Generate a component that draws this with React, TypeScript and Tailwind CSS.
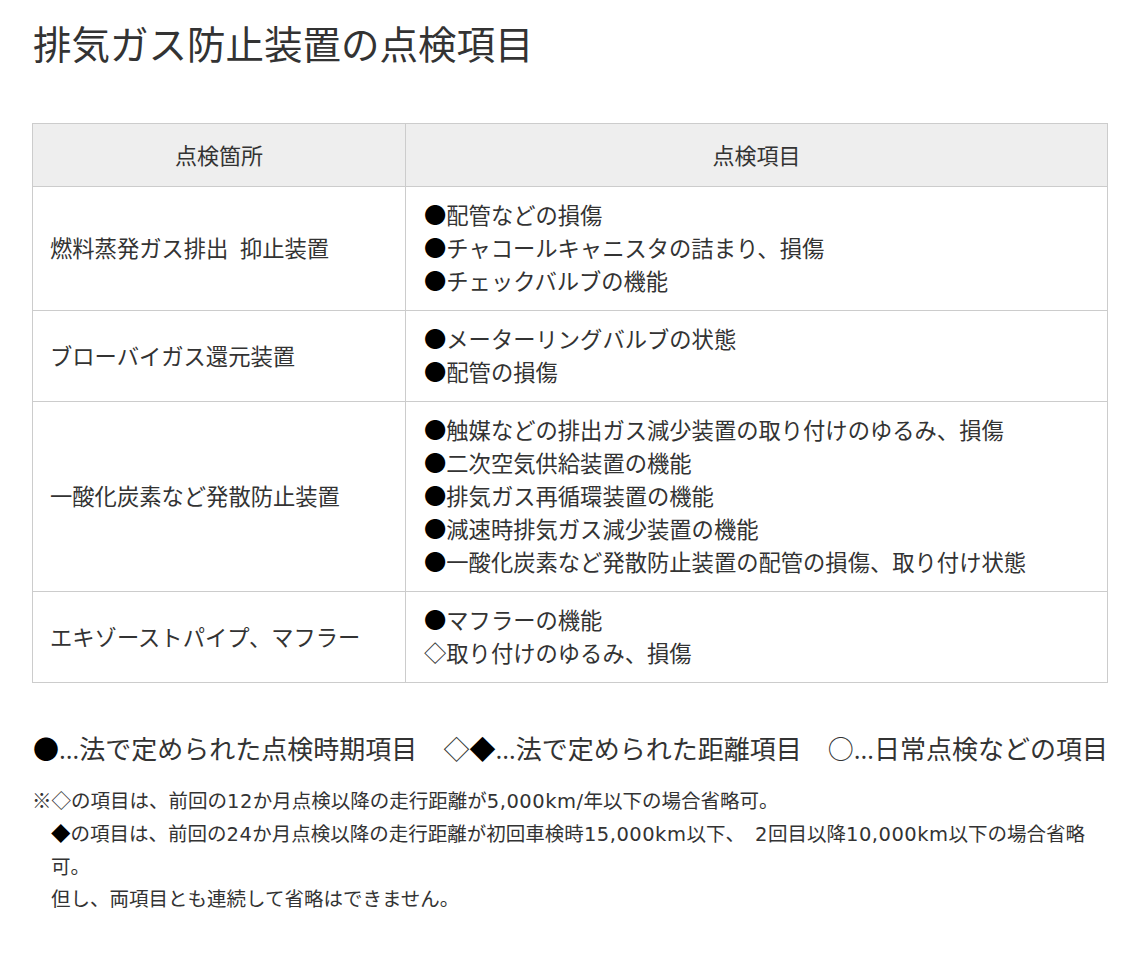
import React from "react";

const rows = [
  {
    place: "燃料蒸発ガス排出\u00a0\u00a0抑止装置",
    items: ["●配管などの損傷", "●チャコールキャニスタの詰まり、損傷", "●チェックバルブの機能"],
  },
  {
    place: "ブローバイガス還元装置",
    items: ["●メーターリングバルブの状態", "●配管の損傷"],
  },
  {
    place: "一酸化炭素など発散防止装置",
    items: [
      "●触媒などの排出ガス減少装置の取り付けのゆるみ、損傷",
      "●二次空気供給装置の機能",
      "●排気ガス再循環装置の機能",
      "●減速時排気ガス減少装置の機能",
      "●一酸化炭素など発散防止装置の配管の損傷、取り付け状態",
    ],
  },
  {
    place: "エキゾーストパイプ、マフラー",
    items: ["●マフラーの機能", "◇取り付けのゆるみ、損傷"],
  },
];

function Item({ text }: { text: string }) {
  const mark = text[0];
  return (
    <div>
      <span className={mark === "●" ? "text-black" : "text-[#333]"}>{mark}</span>
      {text.slice(1)}
    </div>
  );
}

// latin runs in the notes use a wider face
function L({ children }: { children: React.ReactNode }) {
  return (
    <span className="tracking-[0.5px]" style={{ fontFamily: '"DejaVu Sans", sans-serif' }}>
      {children}
    </span>
  );
}

export default function App() {
  return (
    <div
      className="w-[1144px] min-h-[970px] bg-white text-[#333] pl-[32px] pr-[36px] pt-[16px]"
      style={{ fontFamily: '"Open Sans", "Noto Sans CJK JP", sans-serif' }}
    >
      <h1 className="text-[38.5px] leading-[56px] font-normal pl-[1px]">排気ガス防止装置の点検項目</h1>

      <table className="mt-[51px] w-full border-collapse text-[22.3px] leading-[33px]">
        <thead>
          <tr className="bg-[#eee]">
            <th className="w-[373px] h-[63px] border border-[#ccc] font-normal text-[22px]">点検箇所</th>
            <th className="h-[63px] border border-[#ccc] font-normal text-[22px]">点検項目</th>
          </tr>
        </thead>
        <tbody>
          {rows.map((r) => (
            <tr key={r.place}>
              <td className="border border-[#ccc] pl-[17px] pr-3 align-middle">{r.place}</td>
              <td className="border border-[#ccc] pl-[18px] pr-3 py-[12px]">
                {r.items.map((t) => (
                  <Item key={t} text={t} />
                ))}
              </td>
            </tr>
          ))}
        </tbody>
      </table>

      <div className="mt-[48px] flex justify-between text-[26px] leading-[36px] pl-[1px]">
        <span><span className="text-black">●</span>…法で定められた点検時期項目</span>
        <span>◇<span className="text-black">◆</span>…法で定められた距離項目</span>
        <span>○…日常点検などの項目</span>
      </div>

      <div className="mt-[18px] text-[19.5px] leading-[32px] pl-[19px]">
        <p className="-indent-[19px]">
          ※◇の項目は、前回の<L>12</L>か月点検以降の走行距離が<L>5,000km/</L>年以下の場合省略可。
        </p>
        <p>
          <span className="text-black">◆</span>の項目は、前回の<L>24</L>か月点検以降の走行距離が初回車検時<L>15,000km</L>以下、
          {"\u00a0\u00a0"}
          <L>2</L>回目以降<L>10,000km</L>以下の場合省略
          <br />
          可。
        </p>
        <p>但し、両項目とも連続して省略はできません。</p>
      </div>
    </div>
  );
}
